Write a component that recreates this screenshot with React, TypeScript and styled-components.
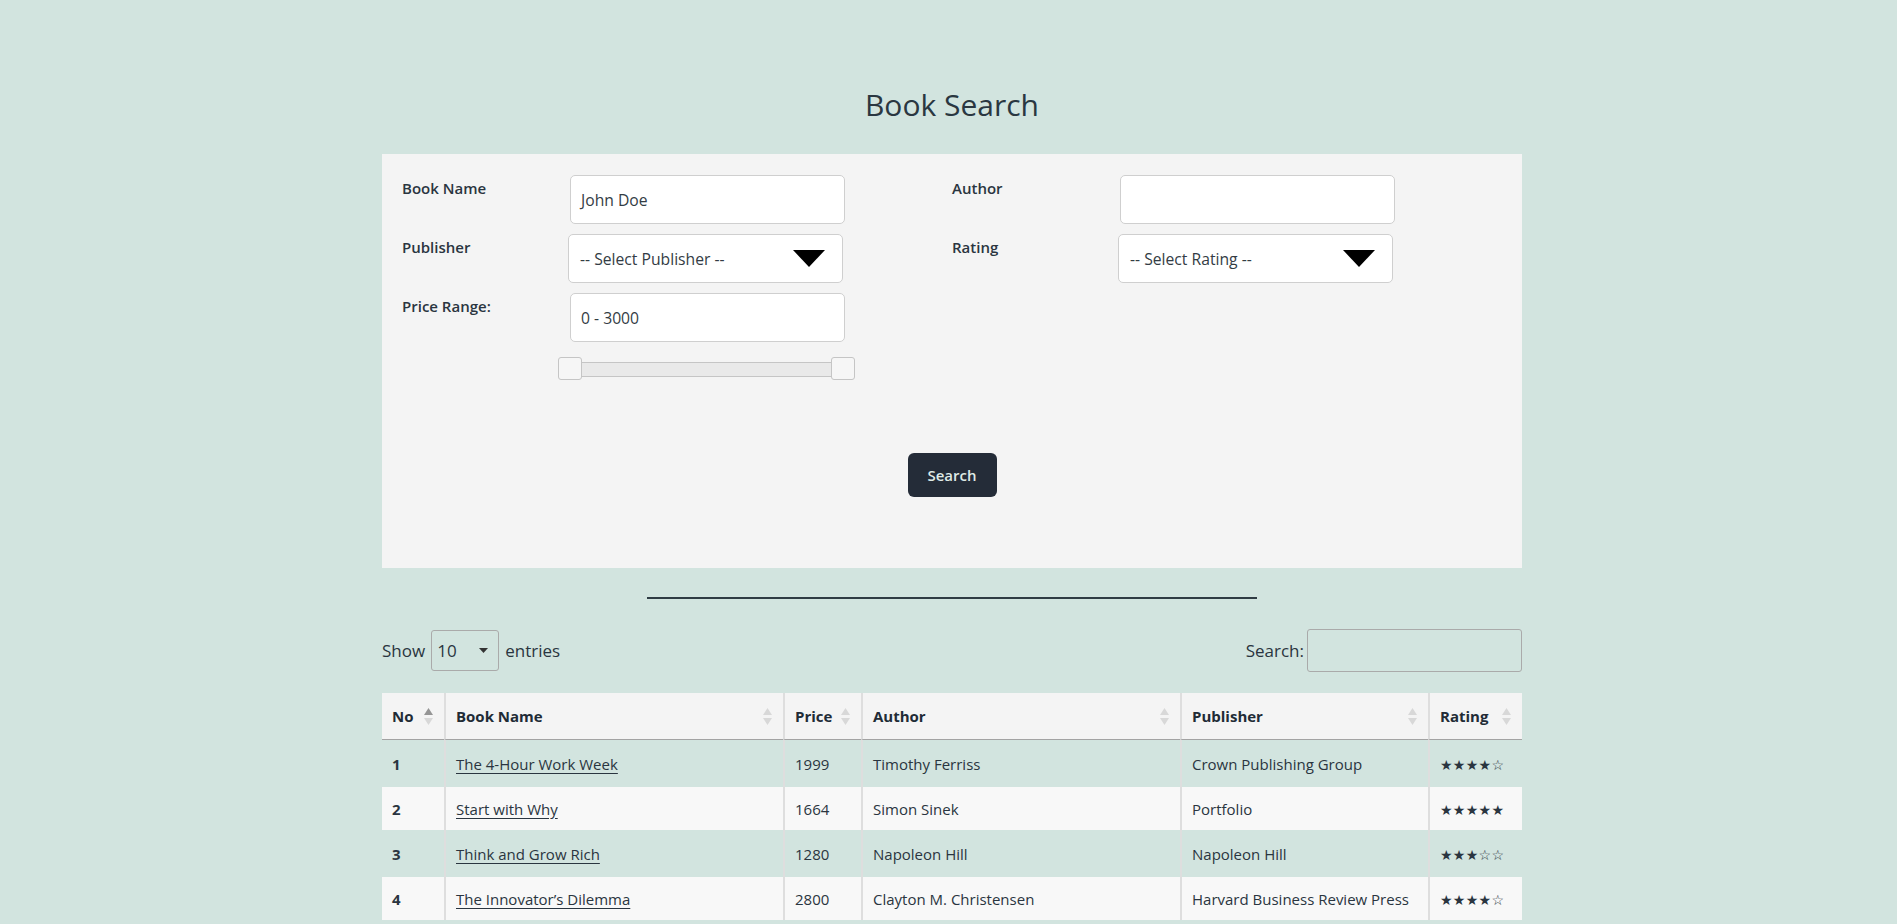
import React from "react";
import styled, { createGlobalStyle } from "styled-components";

const GlobalStyle = createGlobalStyle`
  *, *::before, *::after { box-sizing: border-box; }
  html, body { margin: 0; padding: 0; overflow: hidden; }
  body {
    background: #d2e4df;
    font-family: "Open Sans", "Noto Sans", sans-serif;
    color: #212b36;
  }
`;

const Page = styled.div`
  padding-left: 7px;
`;

const Container = styled.main`
  width: 1140px;
  margin: 0 auto;
  padding-top: 87px;
`;

const Title = styled.h1`
  margin: 0 0 31px;
  font-size: 30px;
  line-height: 36px;
  font-weight: 400;
  text-align: center;
  color: #2a3741;
`;

const Panel = styled.section`
  background: #f4f4f4;
  padding: 21px 20px 71px;
`;

const FieldGrid = styled.div`
  display: grid;
  grid-template-columns: 168px 382px 168px 1fr;
  row-gap: 10px;
  align-items: start;
`;

const Label = styled.label`
  font-size: 15px;
  font-weight: 600;
  line-height: 24px;
  padding-top: 1px;
  color: #2a3540;
`;

const TextInput = styled.div`
  width: 275px;
  height: 49px;
  background: #fff;
  border: 1px solid #cfcfcf;
  border-radius: 5px;
  padding: 0 10px;
  display: flex;
  align-items: center;
  font-size: 15.7px;
  color: #333c44;
`;

const SelectBox = styled.div`
  width: 275px;
  height: 49px;
  margin-left: -2px;
  background: #fff;
  border: 1px solid #cfcfcf;
  border-radius: 5px;
  padding: 0 17px 0 11px;
  display: flex;
  align-items: center;
  justify-content: space-between;
  font-size: 15.7px;
  color: #333c44;
`;

const SliderRow = styled.div`
  padding-left: 168px;
  margin-top: 20px;
`;

const SliderTrack = styled.div`
  position: relative;
  width: 273px;
  height: 15px;
  background: #e9e9e9;
  border: 1px solid #c5c5c5;
  border-radius: 2px;
`;

const SliderHandle = styled.span<{ $left: number }>`
  position: absolute;
  top: -6px;
  left: ${(p) => p.$left}px;
  width: 24px;
  height: 23px;
  background: #f6f6f6;
  border: 1px solid #c5c5c5;
  border-radius: 3px;
`;

const ButtonRow = styled.div`
  display: flex;
  justify-content: center;
  margin-top: 76px;
`;

const SearchButton = styled.button`
  width: 89px;
  height: 44px;
  border: none;
  border-radius: 6px;
  background: #242c38;
  color: #dfeae6;
  font-family: inherit;
  font-size: 15px;
  font-weight: 600;
`;

const Divider = styled.hr`
  width: 610px;
  height: 2px;
  margin: 29px auto 0;
  border: none;
  background: #2f3c44;
`;

const Controls = styled.div`
  display: flex;
  justify-content: space-between;
  align-items: center;
  margin-top: 30px;
  height: 43px;
  font-size: 17px;
  color: #2a3540;
`;

const ControlGroup = styled.div`
  display: flex;
  align-items: center;
  gap: 6px;
`;

const LengthSelect = styled.div`
  width: 68px;
  height: 41px;
  border: 1px solid #aaa;
  border-radius: 3px;
  display: flex;
  align-items: center;
  justify-content: space-between;
  padding: 0 10px 0 5px;
`;

const FilterInput = styled.div`
  width: 215px;
  height: 43px;
  border: 1px solid #aaa;
  border-radius: 3px;
  margin-left: -3px;
`;

const Table = styled.table`
  width: 100%;
  margin-top: 21px;
  border-collapse: separate;
  border-spacing: 0;
  table-layout: fixed;
  font-size: 15px;
`;

const Th = styled.th<{ $w: number }>`
  width: ${(p) => p.$w}px;
  height: 47px;
  background: #f4f4f4;
  border-bottom: 1px solid #a3a3a3;
  padding: 0 11px 0 10px;
  text-align: left;
  font-weight: 700;
  color: #212b36;
  & + & { border-left: 2px solid #dedede; }
`;

const HeadInner = styled.div`
  display: flex;
  align-items: center;
  justify-content: space-between;
`;

const Tr = styled.tr`
  height: 47px;
  &:nth-child(even) {
    height: 43px;
    background: #f8f8f8;
  }
`;

const Td = styled.td<{ $bold?: boolean }>`
  padding: 0 10px;
  font-weight: ${(p) => (p.$bold ? 700 : 400)};
  color: #2a3540;
  white-space: nowrap;
  & + & { border-left: 2px solid #dedede; }
`;

const BookLink = styled.a`
  color: #2a3540;
  text-decoration: underline;
  text-underline-offset: 3px;
`;

const Stars = styled.span`
  font-family: "DejaVu Sans", sans-serif;
  font-size: 14px;
  letter-spacing: 0.3px;
  color: #2a3540;
`;

const BigArrow = () => (
  <svg width="32" height="17" viewBox="0 0 32 17">
    <polygon points="0,0 32,0 16,17" fill="#000" />
  </svg>
);

const SmallCaret = () => (
  <svg width="9" height="5" viewBox="0 0 9 5">
    <polygon points="0,0 9,0 4.5,5" fill="#333" />
  </svg>
);

const SortIcon = ({ active }: { active?: boolean }) => (
  <svg width="9" height="17" viewBox="0 0 9 17">
    <polygon points="0,7 4.5,0 9,7" fill={active ? "#959595" : "#d8d8d8"} />
    <polygon points="0,10 4.5,17 9,10" fill="#d8d8d8" />
  </svg>
);

const columns = [
  { key: "No", w: 62 },
  { key: "Book Name", w: 339 },
  { key: "Price", w: 78 },
  { key: "Author", w: 319 },
  { key: "Publisher", w: 248 },
  { key: "Rating", w: 94 },
];

const books = [
  { no: 1, name: "The 4-Hour Work Week", price: 1999, author: "Timothy Ferriss", publisher: "Crown Publishing Group", rating: "★★★★☆" },
  { no: 2, name: "Start with Why", price: 1664, author: "Simon Sinek", publisher: "Portfolio", rating: "★★★★★" },
  { no: 3, name: "Think and Grow Rich", price: 1280, author: "Napoleon Hill", publisher: "Napoleon Hill", rating: "★★★☆☆" },
  { no: 4, name: "The Innovator’s Dilemma", price: 2800, author: "Clayton M. Christensen", publisher: "Harvard Business Review Press", rating: "★★★★☆" },
];

export default function App() {
  return (
    <Page>
      <GlobalStyle />
      <Container>
        <Title>Book Search</Title>
        <Panel>
          <FieldGrid>
            <Label>Book Name</Label>
            <TextInput>John Doe</TextInput>
            <Label>Author</Label>
            <TextInput />
            <Label>Publisher</Label>
            <SelectBox>
              <span>-- Select Publisher --</span>
              <BigArrow />
            </SelectBox>
            <Label>Rating</Label>
            <SelectBox>
              <span>-- Select Rating --</span>
              <BigArrow />
            </SelectBox>
            <Label>Price Range:</Label>
            <TextInput>0 - 3000</TextInput>
          </FieldGrid>
          <SliderRow>
            <SliderTrack>
              <SliderHandle $left={-13} />
              <SliderHandle $left={260} />
            </SliderTrack>
          </SliderRow>
          <ButtonRow>
            <SearchButton>Search</SearchButton>
          </ButtonRow>
        </Panel>
        <Divider />
        <Controls>
          <ControlGroup>
            <span>Show</span>
            <LengthSelect>
              <span>10</span>
              <SmallCaret />
            </LengthSelect>
            <span>entries</span>
          </ControlGroup>
          <ControlGroup>
            <span>Search:</span>
            <FilterInput />
          </ControlGroup>
        </Controls>
        <Table>
          <thead>
            <tr>
              {columns.map((c, i) => (
                <Th key={c.key} $w={c.w}>
                  <HeadInner>
                    <span>{c.key}</span>
                    <SortIcon active={i === 0} />
                  </HeadInner>
                </Th>
              ))}
            </tr>
          </thead>
          <tbody>
            {books.map((b) => (
              <Tr key={b.no}>
                <Td $bold>{b.no}</Td>
                <Td>
                  <BookLink href="#">{b.name}</BookLink>
                </Td>
                <Td>{b.price}</Td>
                <Td>{b.author}</Td>
                <Td>{b.publisher}</Td>
                <Td>
                  <Stars>{b.rating}</Stars>
                </Td>
              </Tr>
            ))}
          </tbody>
        </Table>
      </Container>
    </Page>
  );
}
